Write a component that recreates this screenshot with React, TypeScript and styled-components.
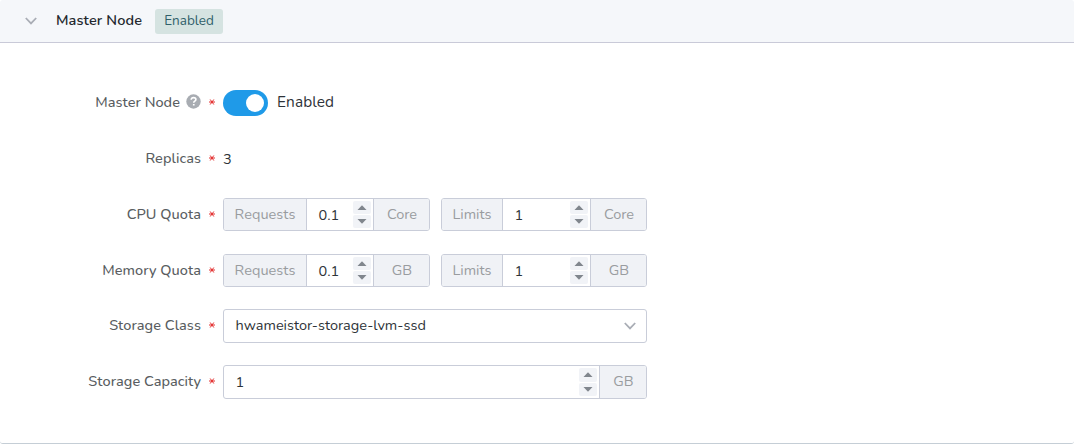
import React from 'react';
import styled, { createGlobalStyle } from 'styled-components';

const GlobalStyle = createGlobalStyle`
  *, *::before, *::after { box-sizing: border-box; }
  body {
    margin: 0;
    background: #fff;
    font-family: Nunito, Lato, "Noto Sans", sans-serif;
    font-size: 14.5px;
    line-height: 20px;
    color: #2e3338;
  }
`;

const Panel = styled.section`
  height: 444px;
  border-bottom: 1px solid #c5ced6;
  border-radius: 3px;
  overflow: hidden;
  background: #fff;
`;

const Header = styled.header`
  display: flex;
  align-items: center;
  height: 43px;
  padding: 0 0 0 25px;
  background: #f5f7fa;
  border-bottom: 1px solid #c9cad8;
`;

const Text = styled.span<{ $spacing?: number; $size?: number }>`
  display: block;
  white-space: nowrap;
  letter-spacing: ${p => p.$spacing ?? 0}px;
  ${p => p.$size && `font-size: ${p.$size}px;`}
`;

const Title = styled(Text)`
  width: 99px;
  padding-bottom: 2px;
  margin-left: 19px;
  font-weight: 600;
  color: #23282d;
`;

const Tag = styled.span`
  display: flex;
  align-items: center;
  justify-content: center;
  width: 68px;
  height: 25px;
  border-radius: 3px;
  background: #d5e3e1;
  color: #2f6069;
`;

const Form = styled.div`
  display: flex;
  flex-direction: column;
  gap: 22px;
  padding-top: 43px;
`;

const Row = styled.div<{ $height?: number }>`
  display: flex;
  align-items: flex-start;
  height: ${p => p.$height ?? 34}px;
`;

const Label = styled.div`
  display: flex;
  align-items: center;
  justify-content: flex-end;
  width: 223px;
  height: 33px;
  padding: 0 8px 2px 0;
  color: #595d61;
  font-weight: 500;
`;

const StarIcon = styled.svg`
  margin-left: 8px;
  margin-top: 1px;
  flex: none;
`;

const HelpIcon = styled.svg`
  margin-left: 6px;
  flex: none;
`;

const Value = styled.div`
  display: flex;
  align-items: center;
  height: 34px;
`;

const SwitchText = styled(Text)`
  padding-bottom: 2px;
`;

const Switch = styled.span`
  display: flex;
  align-items: center;
  justify-content: flex-end;
  width: 45px;
  height: 26px;
  margin-right: 9px;
  padding-right: 4px;
  border-radius: 13px;
  background: #1f9ae8;
`;

const Knob = styled.span`
  width: 18px;
  height: 18px;
  border-radius: 50%;
  background: #fff;
`;

const Group = styled.div<{ $width: number; $height?: number }>`
  display: flex;
  width: ${p => p.$width}px;
  height: ${p => p.$height ?? 33}px;
  margin-right: 11px;
  border: 1px solid #c9cdd9;
  border-radius: 3px;
  overflow: hidden;
`;

const Addon = styled.div<{ $width: number; $side: 'left' | 'right' }>`
  display: flex;
  align-items: center;
  justify-content: center;
  flex: none;
  width: ${p => p.$width}px;
  padding-bottom: 2px;
  padding-left: ${p => (p.$side === 'right' ? 1 : 0)}px;
  background: #f0f2f6;
  color: #999c9f;
  border-${p => (p.$side === 'left' ? 'right' : 'left')}: 1px solid #c9cdd9;
`;

const Field = styled.div`
  display: flex;
  flex: 1;
  align-items: center;
  justify-content: space-between;
  padding: 0 2px 0 11.5px;
`;

const Stepper = styled.div`
  display: flex;
  flex-direction: column;
  gap: 1px;
  align-self: stretch;
  width: 18px;
  margin: 2px 0;
`;

const Step = styled.span`
  display: flex;
  flex: 1;
  align-items: center;
  justify-content: center;
  border-radius: 2px;
  background: #f1f3f7;
`;

const Select = styled(Group)`
  align-items: center;
  justify-content: space-between;
  padding: 0 10px 0 11.6px;
`;

const SelectText = styled(Text)`
  padding-bottom: 2px;
`;

const Star = () => (
  <StarIcon width="6" height="6" viewBox="0 0 6 6" stroke="#e22b2b">
    <path d="M0 3h6M1.2 .5l3.6 5M1.2 5.5l3.6-5" strokeWidth="1" />
  </StarIcon>
);

const Help = () => (
  <HelpIcon width="15" height="15" viewBox="0 0 15 15" fill="none">
    <circle cx="7.5" cy="7.5" r="7.2" fill="#a8acb2" />
    <path d="M5.2 5.8c0-1.4 1-2.2 2.4-2.2s2.3.8 2.3 2c0 1.5-2.2 1.6-2.2 3.1" stroke="#fff" strokeWidth="1.6" />
    <path d="M6.9 9.9h1.7v1.6H6.9z" fill="#fff" />
  </HelpIcon>
);

const Chevron = () => (
  <svg width="12" height="8" viewBox="0 0 12 8" fill="none" stroke="#a9adb5" strokeWidth="1.8">
    <path d="M.8 1L6 6.4 11.2 1" />
  </svg>
);

const NumberField = ({ value }: { value: string }) => (
  <Field>
    <Text>{value}</Text>
    <Stepper>
      <Step>
        <svg width="10" height="5" viewBox="0 0 10 5"><path d="M.5 5L5 .3 9.5 5z" fill="#80868d" /></svg>
      </Step>
      <Step>
        <svg width="10" height="5" viewBox="0 0 10 5"><path d="M.5 0L5 4.7 9.5 0z" fill="#80868d" /></svg>
      </Step>
    </Stepper>
  </Field>
);

const FormLabel = ({ text, help }: { text: string; help?: boolean }) => (
  <Label>
    <Text $spacing={0.06}>{text}</Text>
    {help && <Help />}
    <Star />
  </Label>
);

const Quota = ({ unit }: { unit: string }) => (
  <>
    <Group $width={207}>
      <Addon $width={83} $side="left"><Text $spacing={0.05}>Requests</Text></Addon>
      <NumberField value="0.1" />
      <Addon $width={56} $side="right"><Text>{unit}</Text></Addon>
    </Group>
    <Group $width={206}>
      <Addon $width={61} $side="left"><Text>Limits</Text></Addon>
      <NumberField value="1" />
      <Addon $width={56} $side="right"><Text>{unit}</Text></Addon>
    </Group>
  </>
);

export default function App() {
  return (
    <>
      <GlobalStyle />
      <Panel>
        <Header>
          <Chevron />
          <Title $spacing={0.12}>Master Node</Title>
          <Tag><Text $size={13.5}>Enabled</Text></Tag>
        </Header>
        <Form>
          <Row>
            <FormLabel text="Master Node" help />
            <Value><Switch><Knob /></Switch><SwitchText $size={15.4} $spacing={0.1}>Enabled</SwitchText></Value>
          </Row>
          <Row>
            <FormLabel text="Replicas" />
            <Value><Text>3</Text></Value>
          </Row>
          <Row>
            <FormLabel text="CPU Quota" />
            <Quota unit="Core" />
          </Row>
          <Row $height={33}>
            <FormLabel text="Memory Quota" />
            <Quota unit="GB" />
          </Row>
          <Row>
            <FormLabel text="Storage Class" />
            <Select $width={424} $height={34}>
              <SelectText>hwameistor-storage-lvm-ssd</SelectText>
              <Chevron />
            </Select>
          </Row>
          <Row>
            <FormLabel text="Storage Capacity" />
            <Group $width={424} $height={34}>
              <NumberField value="1" />
              <Addon $width={47} $side="right"><Text>GB</Text></Addon>
            </Group>
          </Row>
        </Form>
      </Panel>
    </>
  );
}
